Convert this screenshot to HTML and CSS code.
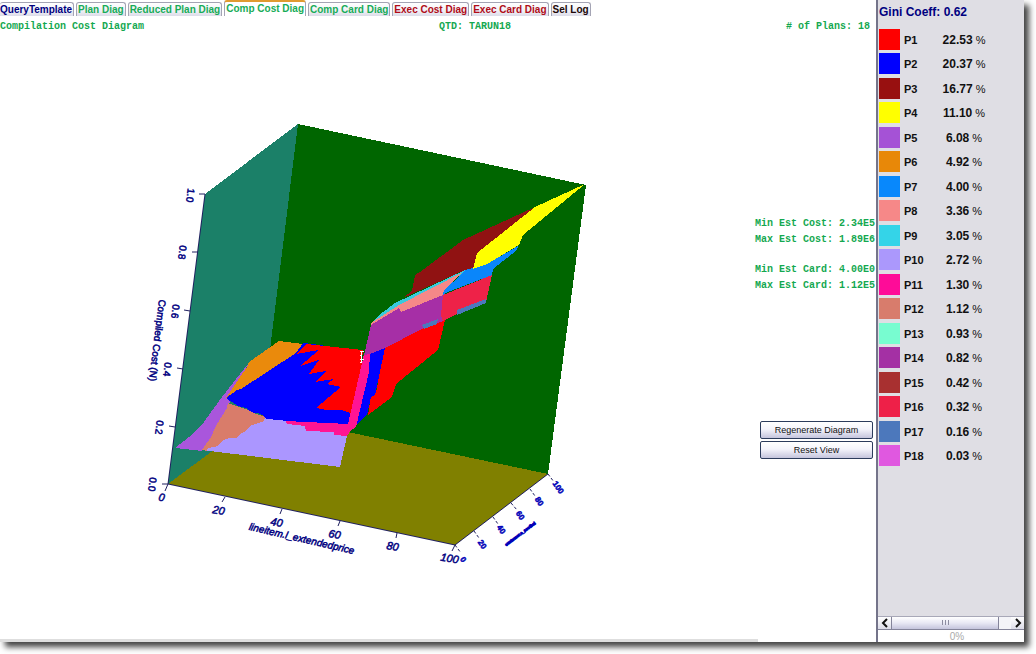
FILE: index.html
```html
<!DOCTYPE html>
<html lang="en">
<head>
<meta charset="utf-8">
<title>Compilation Cost Diagram</title>
<link rel="stylesheet" href="styles.css">
</head>
<body>
<div class="window">
  <main class="main">
    <div class="tabs" role="tablist">
      <button class="tab tab-navy" role="tab">QueryTemplate</button>
      <button class="tab tab-green" role="tab">Plan Diag</button>
      <button class="tab tab-green" role="tab">Reduced Plan Diag</button>
      <button class="tab tab-green tab-active" role="tab" aria-selected="true">Comp Cost Diag</button>
      <button class="tab tab-green" role="tab">Comp Card Diag</button>
      <button class="tab tab-red" role="tab">Exec Cost Diag</button>
      <button class="tab tab-red" role="tab">Exec Card Diag</button>
      <button class="tab tab-dark" role="tab">Sel Log</button>
    </div>
    <header class="info">
      <span class="info-title">Compilation Cost Diagram</span>
      <div class="info-rest"><span>QTD: TARUN18</span><span># of Plans: 18</span></div>
    </header>
    <div class="workspace">
      <svg class="diagram" viewBox="0 34 758 604" role="img" aria-label="Compiled cost surface">
        <g shape-rendering="crispEdges">
          <polygon fill="#006600" points="298,124 586,185 548,474 262,414"/>
          <polygon fill="#1b8068" points="205,194 298,124 262,414 168,484"/>
          <polygon fill="#808000" points="168,484 262,414 548,474 455,545"/>
          <!-- flat region -->
          <polygon fill="#a956dc" points="249,363 240,374 222,397 201,426 189,437 175,448 202,451 212,436 222,416 228,407 236,385"/>
          <polygon fill="#ea8a0c" points="279,341 303,344 296,353 274,369 241,389 237,390 226,398 238,380 247,367 249,362"/>
          <polygon fill="#ab96ff" points="202,450 214,440 237,432 250,424 264,418 270,410 286,409 345,430 347,436 340,467"/>
          <polygon fill="#d97c6a" points="228,403 248,410 256,414 265,417 264,421 250,426 246,431 240,434 236,438 229,438 222,441 218,446 208,448 207,451 202,450 211,437 216,426 222,416 227,408"/>
          <polygon fill="#0000ff" points="303,343 312,344 363,351 350,425 306,423 286,421 279,420 266,419 264,416 258,413 254,413 248,410 246,408 238,406 232,402 229,401 226,398 237,390 241,389 296,353"/>
          <polygon fill="#ff0000" points="306,344 363,350 361,372 351,413 341,410 326,410 316,408 341,387 327,384 334,379 315,382 326,371 309,374 319,360 300,366 319,350 296,354"/>
          <polygon fill="#ff1493" points="286,421 306,422 348,424 364,354 371,353 372,360 351,430 347,436 334,435 334,432 306,431 305,426 287,424"/>
          <!-- rising region -->
          <polygon fill="#ff0000" points="384,348 422,328 445,320 438,350 396,384 392,397 368,415 371,396 376,393"/>
          <polygon fill="#0000ff" points="370,353 385,348 375,395 371,397 367,415 354,427 358,401"/>
          <polygon fill="#ff1493" points="364,355 370,353 369,372 356,427 348,432 352,415"/>
          <polygon fill="#a62fa6" points="371,325 399,308 401,312 443,295 448,312 443,321 422,329 385,348 370,354 364,355"/>
          <polygon fill="#ee2248" points="443,295 492,275 486,302 457,314 443,321 441,315"/>
          <polygon fill="#4b78bc" points="422,325 438,319 437,324 424,329"/>
          <polygon fill="#4b78bc" points="457,310 486,299 486,303 457,315"/>
          <polygon fill="#901212" points="415,275 420,272 463,240 535,207 477,253 473,269 465,270 403,298 412,291"/>
          <polygon fill="#38cadd" points="386,310 395,303 465,270 467,272 401,305 371,324 379,315"/>
          <polygon fill="#f58888" points="371,323 399,305 463,272 444,290 443,295 401,312 399,308 371,325"/>
          <polygon fill="#0a86fa" points="465,270 473,268 487,264 518,246 517,250 493,269 492,275 448,292 443,295 444,290 453,282"/>
          <polygon fill="#ffff00" points="585,184 535,207 477,253 473,269 487,264 519,245 523,235"/>
          <path fill="none" stroke="#fff" d="M360 351.500h4M361.500 352v11M360 355.500h2M360 359.500h4M360 362.500h2"/>
        </g>
        <g class="axis" fill="none" stroke="#202060">
          <path d="M205 194 168 484 455 545 548 474"/>
          <path d="M205 194l-6 0M198 252l-6 0M190 311l-6-1M183 369l-6-1M175 427l-6-1M168 484l-6 0"/>
          <path d="M168 484l-3 7M225 497l-3 5M282 509l-2 5M340 521l-2 5M397 533l-1 5M455 545l-3 6"/>
          <path stroke-dasharray="3 2" d="M455 545l6 8M474 531l5 7M493 517l5 7M511 503l6 7M530 489l5 7M548 474l6 8"/>
        </g>
        <g class="axis-text">
          <text transform="translate(187 195) rotate(97)">1.0</text>
          <text transform="translate(179 252) rotate(97)">0.8</text>
          <text transform="translate(172 311) rotate(97)">0.6</text>
          <text transform="translate(164 369) rotate(97)">0.4</text>
          <text transform="translate(156 427) rotate(97)">0.2</text>
          <text transform="translate(149 484) rotate(97)">0.0</text>
          <text transform="translate(154 340) rotate(97)">Compiled Cost (N)</text>
        </g>
        <g class="axis-text axis-italic">
          <text transform="translate(161 501) rotate(10)">0</text>
          <text transform="translate(218 514) rotate(10)">20</text>
          <text transform="translate(276 526) rotate(10)">40</text>
          <text transform="translate(334 538) rotate(10)">60</text>
          <text transform="translate(392 550) rotate(10)">80</text>
          <text transform="translate(449 562) rotate(10)">100</text>
          <text transform="translate(301 542) rotate(13)">lineitem.l_extendedprice</text>
        </g>
        <g class="axis-text axis-depth">
          <text transform="translate(461 561) rotate(55)">0</text>
          <text transform="translate(480 546) rotate(55)">20</text>
          <text transform="translate(499 531) rotate(55)">40</text>
          <text transform="translate(518 517) rotate(55)">60</text>
          <text transform="translate(537 503) rotate(55)">80</text>
          <text transform="translate(556 489) rotate(55)">100</text>
          <text class="depth-title" transform="translate(521 535) rotate(-37)">customer.c_acctbal</text>
        </g>
      </svg>
      <aside class="tools">
        <div class="stats">
          <p>Min Est Cost: 2.34E5</p>
          <p>Max Est Cost: 1.89E6</p>
        </div>
        <div class="stats">
          <p>Min Est Card: 4.00E0</p>
          <p>Max Est Card: 1.12E5</p>
        </div>
        <div class="actions">
          <button class="action">Regenerate Diagram</button>
          <button class="action">Reset View</button>
        </div>
      </aside>
      <div class="statusline"></div>
    </div>
  </main>
  <aside class="sidebar">
    <h1 class="gini">Gini Coeff: 0.62</h1>
    <table class="legend">
      <tbody>
        <tr><td><i class="swatch p1"></i></td><th scope="row">P1</th><td class="share"><b>22.53</b> %</td></tr>
        <tr><td><i class="swatch p2"></i></td><th scope="row">P2</th><td class="share"><b>20.37</b> %</td></tr>
        <tr><td><i class="swatch p3"></i></td><th scope="row">P3</th><td class="share"><b>16.77</b> %</td></tr>
        <tr><td><i class="swatch p4"></i></td><th scope="row">P4</th><td class="share"><b>11.10</b> %</td></tr>
        <tr><td><i class="swatch p5"></i></td><th scope="row">P5</th><td class="share"><b>6.08</b> %</td></tr>
        <tr><td><i class="swatch p6"></i></td><th scope="row">P6</th><td class="share"><b>4.92</b> %</td></tr>
        <tr><td><i class="swatch p7"></i></td><th scope="row">P7</th><td class="share"><b>4.00</b> %</td></tr>
        <tr><td><i class="swatch p8"></i></td><th scope="row">P8</th><td class="share"><b>3.36</b> %</td></tr>
        <tr><td><i class="swatch p9"></i></td><th scope="row">P9</th><td class="share"><b>3.05</b> %</td></tr>
        <tr><td><i class="swatch p10"></i></td><th scope="row">P10</th><td class="share"><b>2.72</b> %</td></tr>
        <tr><td><i class="swatch p11"></i></td><th scope="row">P11</th><td class="share"><b>1.30</b> %</td></tr>
        <tr><td><i class="swatch p12"></i></td><th scope="row">P12</th><td class="share"><b>1.12</b> %</td></tr>
        <tr><td><i class="swatch p13"></i></td><th scope="row">P13</th><td class="share"><b>0.93</b> %</td></tr>
        <tr><td><i class="swatch p14"></i></td><th scope="row">P14</th><td class="share"><b>0.82</b> %</td></tr>
        <tr><td><i class="swatch p15"></i></td><th scope="row">P15</th><td class="share"><b>0.42</b> %</td></tr>
        <tr><td><i class="swatch p16"></i></td><th scope="row">P16</th><td class="share"><b>0.32</b> %</td></tr>
        <tr><td><i class="swatch p17"></i></td><th scope="row">P17</th><td class="share"><b>0.16</b> %</td></tr>
        <tr><td><i class="swatch p18"></i></td><th scope="row">P18</th><td class="share"><b>0.03</b> %</td></tr>
      </tbody>
    </table>
    <div class="scrollbar">
      <button class="arrow" aria-label="Scroll left"><svg viewBox="0 0 8 10" width="8" height="10"><path d="M6 1 2 5l4 4" fill="none" stroke="#111" stroke-width="2"/></svg></button>
      <div class="track"><div class="thumb"><svg viewBox="0 0 8 6" width="8" height="6"><path d="M1.500 0v5M4.500 0v5M7.500 0v5" stroke="#8c8ca0"/></svg></div></div>
      <button class="arrow" aria-label="Scroll right"><svg viewBox="0 0 8 10" width="8" height="10"><path d="M2 1l4 4-4 4" fill="none" stroke="#111" stroke-width="2"/></svg></button>
    </div>
    <div class="progress" role="progressbar" aria-valuenow="0" aria-label="Progress">0%</div>
  </aside>
</div>
</body>
</html>
```

FILE: styles.css
```css
* { box-sizing: border-box; }

body {
  margin: 0;
  padding: 0 12px 12px 0;
  background: #fff;
  color: #111;
  font-family: "Liberation Sans", Arial, sans-serif;
  font-size: 11px;
}

button { font-family: inherit; margin: 0; }

.window {
  display: flex;
  min-height: calc(100vh - 12px);
  background: #fff;
  box-shadow: 5px 5px 6px #444;
}

.main {
  flex: 1;
  min-width: 0;
  display: flex;
  flex-direction: column;
}

.tabs {
  display: flex;
  align-items: flex-end;
  gap: 2px;
  height: 16px;
}

.tab {
  height: 14px;
  padding: 0 1px;
  border: 1px solid #a4a4b4;
  border-bottom: 0;
  border-radius: 3px 3px 0 0;
  background: linear-gradient(#fff, #f0f0f6 60%, #dcdce8);
  font-size: 10px;
  font-weight: bold;
  line-height: 14px;
  white-space: nowrap;
}

.tab:first-child { padding-left: 0; border-left: 0; }
.tab-navy { color: #000080; }
.tab-green { color: #18ac58; }
.tab-red { color: #b00c18; }
.tab-dark { color: #200808; }

.tab-active {
  height: 16px;
  border-top: 2px solid #e09a30;
  background: #fff;
}

.info,
.stats {
  color: #14a850;
  font-family: "Liberation Mono", "Courier New", monospace;
  font-size: 10px;
  font-weight: bold;
  white-space: nowrap;
}

.info {
  display: grid;
  grid-template-columns: 1fr 1fr;
  height: 18px;
  line-height: 22px;
  padding-right: 6px;
}

.info-rest {
  display: flex;
  justify-content: space-between;
  padding-left: 4px;
}

.workspace {
  flex: 1;
  display: grid;
  grid-template-columns: minmax(0, 1fr) 118px;
  grid-template-rows: 1fr 3px;
}

.diagram { display: block; width: 100%; }

.axis-text {
  fill: #000080;
  stroke: #000080;
  stroke-width: 0.5px;
  font-size: 10px;
  text-anchor: middle;
}

.axis-italic { font-size: 11px; font-style: italic; }
.axis-italic text:last-child { font-size: 10px; }

.axis-depth {
  fill: #0000b8;
  stroke: #0000b8;
  font-size: 8px;
  font-weight: bold;
}

.axis-depth .depth-title { font-size: 4px; stroke-width: 1px; }

.tools { padding: 182px 1px 0 0; }

.stats {
  display: flex;
  flex-direction: column;
  align-items: flex-end;
  margin-bottom: 14px;
  line-height: 16px;
}

.stats p { margin: 0; }

.actions {
  display: grid;
  gap: 2px;
  margin-top: 127px;
  padding: 0 2px;
}

.action {
  height: 18px;
  padding: 0;
  border: 1px solid #2c3c5c;
  border-radius: 2px;
  background: linear-gradient(#fff, #f4f4fb 45%, #c4c4dc);
  color: #111;
  font-size: 9px;
}

.statusline { background: #dedede; }

.sidebar {
  width: 148px;
  display: flex;
  flex-direction: column;
  border-left: 2px solid #74748a;
  background: #dfdee4;
}

.gini {
  margin: 0;
  padding: 4px 0 0 1px;
  height: 27px;
  color: #000080;
  font-size: 12px;
  line-height: 17px;
}

.legend { border-collapse: collapse; margin-left: 1px; align-self: flex-start; }
.legend td, .legend th { height: 24px; padding: 0; }
.legend tr:nth-child(even) td { height: 25px; }

.legend th {
  width: 34px;
  padding-left: 4px;
  font-size: 11px;
  text-align: left;
}

.legend .share { width: 60px; padding-top: 1px; font-size: 11px; text-align: center; }
.legend th { padding-top: 1px; }
.share b { font-size: 12px; }

.swatch { display: block; width: 21px; height: 21px; }
.p1 { background: #fe0000; }
.p2 { background: #0000fe; }
.p3 { background: #981010; }
.p4 { background: #ffff00; }
.p5 { background: #a552d6; }
.p6 { background: #e88808; }
.p7 { background: #0888fc; }
.p8 { background: #f68888; }
.p9 { background: #34d4e8; }
.p10 { background: #ab98fc; }
.p11 { background: #fe0c98; }
.p12 { background: #d87c6c; }
.p13 { background: #78fcd0; }
.p14 { background: #a430a4; }
.p15 { background: #a83030; }
.p16 { background: #ee2048; }
.p17 { background: #4c78bc; }
.p18 { background: #e058e0; }

.scrollbar {
  display: flex;
  height: 14px;
  margin-top: auto;
  border-top: 1px solid #a8a8b8;
  border-bottom: 1px solid #84849a;
  background: #f4f4f8;
}

.arrow {
  display: grid;
  place-items: center;
  width: 13px;
  padding: 0;
  border: 0;
  background: linear-gradient(#fff, #dcdce8);
}

.track { flex: 1; }

.thumb {
  display: grid;
  place-items: center;
  width: 90%;
  height: 100%;
  border: solid #84849a;
  border-width: 0 1px;
  background: linear-gradient(#fff, #e8e8f4 50%, #c4c4dc);
}

.progress {
  height: 12px;
  padding-left: 12px;
  background: #fff;
  color: #aaa;
  font-size: 10px;
  line-height: 13px;
  text-align: center;
}
```
